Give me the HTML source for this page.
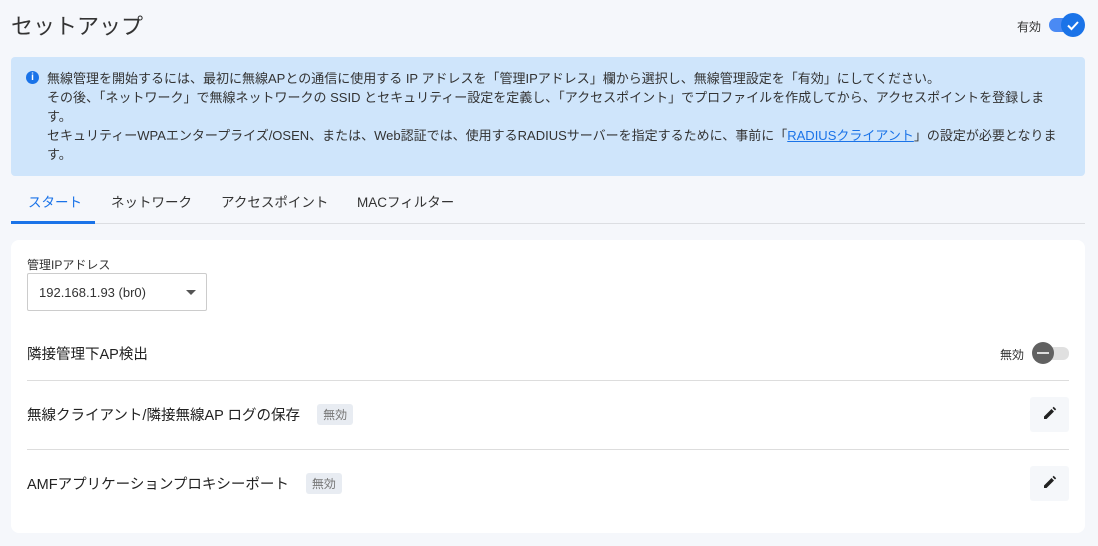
<!DOCTYPE html>
<html><head><meta charset="utf-8"><style>
*{margin:0;padding:0;box-sizing:border-box}
body{width:1098px;height:546px;background:#f5f7fb;font-family:"Liberation Sans","Noto Sans CJK JP",sans-serif;color:#222;position:relative;overflow:hidden}
.abs{position:absolute}
h1{position:absolute;left:11px;top:9px;font-size:22px;font-weight:400;color:#333}
.info{position:absolute;left:11px;top:57px;width:1074px;height:119px;background:#cfe5fb;border-radius:4px}
.info .t{position:absolute;left:36px;top:12px;width:1010px;font-size:13px;line-height:19px;color:#333}
.info a{color:#1a73e8;text-decoration:underline}
.ic{position:absolute;left:15px;top:14px;width:13px;height:13px;border-radius:50%;background:#1a73e8;color:#fff;font-size:10px;font-weight:bold;text-align:center;line-height:13px}
.tabs{position:absolute;left:11px;top:188px;width:1074px;height:36px;border-bottom:1px solid #dcdee2}
.tab{position:absolute;top:3px;font-size:13.5px;color:#333}
.card{position:absolute;left:11px;top:240px;width:1074px;height:293px;background:#fff;border-radius:8px}
.sel{position:absolute;left:16px;top:33px;width:180px;height:38px;border:1px solid #ccc;border-radius:2px;font-size:13px;padding:11px 0 0 11px;color:#333}
.row{position:absolute;left:16px;font-size:14.5px;color:#222}
.hr{position:absolute;left:16px;width:1042px;height:1px;background:#ddd}
.badge{display:inline-block;background:#e8ecf2;color:#777;font-size:12px;padding:2px 6px;border-radius:3px;margin-left:17px;vertical-align:1px}
.eb{position:absolute;left:1019px;width:39px;height:35px;background:#f5f7fa;border-radius:3px}
</style></head><body>
<h1>セットアップ</h1>
<div class="abs" style="left:1017px;top:18px;font-size:12px;color:#333">有効</div>
<div class="abs" style="left:1049px;top:18px;width:32px;height:14px;border-radius:7px;background:#4a8af4"></div>
<div class="abs" style="left:1061px;top:13px;width:24px;height:24px;border-radius:50%;background:#1a73e8"><svg width="24" height="24"><path d="M7 12.5l3.5 3.5 6.5-7" stroke="#fff" stroke-width="2" fill="none"/></svg></div>
<div class="info"><div class="ic">i</div><div class="t">無線管理を開始するには、最初に無線APとの通信に使用する IP アドレスを「管理IPアドレス」欄から選択し、無線管理設定を「有効」にしてください。<br>その後、「ネットワーク」で無線ネットワークの SSID とセキュリティー設定を定義し、「アクセスポイント」でプロファイルを作成してから、アクセスポイントを登録しま<br>す。<br>セキュリティーWPAエンタープライズ/OSEN、または、Web認証では、使用するRADIUSサーバーを指定するために、事前に「<a>RADIUSクライアント</a>」の設定が必要となりま<br>す。</div></div>
<div class="tabs">
<div class="tab" style="left:17px;color:#1a73e8">スタート</div>
<div class="tab" style="left:100px">ネットワーク</div>
<div class="tab" style="left:210px">アクセスポイント</div>
<div class="tab" style="left:346px">MACフィルター</div>
<div class="abs" style="left:0;top:33px;width:84px;height:3px;background:#1a73e8"></div>
</div>
<div class="card">
<div class="abs" style="left:16px;top:16px;font-size:12px;color:#333">管理IPアドレス</div>
<div class="sel">192.168.1.93 (br0)<div class="abs" style="left:158px;top:16px;width:0;height:0;border-left:5px solid transparent;border-right:5px solid transparent;border-top:5px solid #555"></div></div>
<div class="row" style="top:103px">隣接管理下AP検出</div>
<div class="abs" style="left:989px;top:106px;font-size:12px;color:#333">無効</div>
<div class="abs" style="left:1024px;top:107px;width:34px;height:13px;border-radius:6px;background:#e0e0e0"></div>
<div class="abs" style="left:1021px;top:102px;width:22px;height:22px;border-radius:50%;background:#616161"><div class="abs" style="left:5px;top:10px;width:12px;height:2px;background:#ddd"></div></div>
<div class="hr" style="top:140px"></div>
<div class="row" style="top:164px">無線クライアント/隣接無線AP ログの保存<span class="badge">無効</span></div>
<div class="eb" style="top:157px"><svg width="39" height="35"><path d="M14 22v-2.5l7.5-7.5 2.5 2.5-7.5 7.5z M22.5 11l1.2-1.2 2.5 2.5-1.2 1.2z" fill="#222"/></svg></div>
<div class="hr" style="top:209px"></div>
<div class="row" style="top:233px">AMFアプリケーションプロキシーポート<span class="badge">無効</span></div>
<div class="eb" style="top:226px"><svg width="39" height="35"><path d="M14 22v-2.5l7.5-7.5 2.5 2.5-7.5 7.5z M22.5 11l1.2-1.2 2.5 2.5-1.2 1.2z" fill="#222"/></svg></div>
</div>
</body></html>
